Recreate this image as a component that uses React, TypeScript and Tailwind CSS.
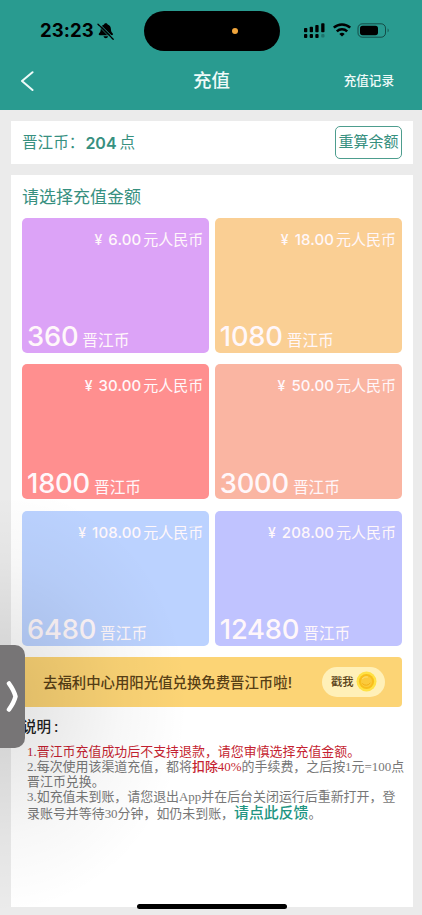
import React from "react";

const packs = [
  { price: "6.00", coins: "360", bg: "bg-[#dca3f7]" },
  { price: "18.00", coins: "1080", bg: "bg-[#facf94]" },
  { price: "30.00", coins: "1800", bg: "bg-[#ff8f8f]" },
  { price: "50.00", coins: "3000", bg: "bg-[#fab5a2]" },
  { price: "108.00", coins: "6480", bg: "bg-[#bbd2ff]" },
  { price: "208.00", coins: "12480", bg: "bg-[#c0c3ff]" },
];

function StatusBar() {
  return (
    <div className="relative h-[52px] text-black">
      <div className="flex h-[62px] items-center pl-[40px]">
        <span className="w-[54px] text-[18.5px] font-bold tracking-[0.1px]">23:23</span>
        <svg className="ml-[3px]" width="18" height="18" viewBox="0 0 18 18">
          <path d="M8.800 1.200C10 1.200 10.500 1.800 10.600 2.500c2.300.8 3.200 2.500 3.300 4.500.1 2.400.7 3.300 1.700 4.300.8.900.4 2-.7 2H2.800c-1.100 0-1.500-1.100-.7-2 1-1 1.600-1.900 1.700-4.300.1-2 1-3.700 3.300-4.500.1-.7.500-1.300 1.700-1.300zM6.500 14.300h4.600c-.3 1.300-1.200 2-2.300 2s-2-.7-2.300-2z" fill="currentColor" />
          <path d="M1.800 1.300 17 16.300" stroke="#299b90" strokeWidth="1" />
          <path d="M1 2.200 16.200 17.200" stroke="currentColor" strokeWidth="1.300" strokeLinecap="round" />
          <path d="M1.500 4 13.500 16" stroke="#299b90" strokeWidth=".7" />
        </svg>
      </div>
      <div className="absolute left-[144px] top-[11px] flex h-[40px] w-[136px] items-center rounded-full bg-black">
        <span className="ml-[88px] size-[6px] rounded-full bg-[#f0a53c]" />
      </div>
      <svg className="absolute left-[303px] top-[22px]" width="88" height="17" viewBox="0 0 88 17">
        <g fill="currentColor">
          <rect x="1" y="6" width="3.300" height="4.300" rx=".8" />
          <rect x="6.700" y="4.700" width="3.300" height="5.600" rx=".8" />
          <rect x="12.300" y="3" width="3.300" height="7.300" rx=".8" />
          <rect x="18.200" y="1.200" width="3.300" height="9.100" rx=".8" />
          <rect x="1" y="12" width="3.300" height="4" rx=".9" />
          <rect x="6.700" y="12" width="3.300" height="4" rx=".9" />
          <rect x="12.300" y="12" width="3.300" height="4" rx=".9" />
          <rect x="18.200" y="12" width="3.300" height="3.500" rx=".9" opacity=".25" />
          <path d="M39 14.600 36.300 11.900a4 4 0 0 1 5.400 0z" />
          <rect x="57" y="3.800" width="18" height="9.400" rx="2.600" />
          <path d="M84.700 6.500v3.800c1.200-.3 1.200-3.500 0-3.800z" opacity=".5" />
        </g>
        <g fill="none" stroke="currentColor" strokeWidth="2.500">
          <path d="M30.800 5.700a12 12 0 0 1 16.400 0" />
          <path d="M33.800 9.300a7.600 7.600 0 0 1 10.400 0" />
        </g>
        <rect x="55" y="1.800" width="27.500" height="13.400" rx="4.300" fill="none" stroke="currentColor" opacity=".5" />
      </svg>
    </div>
  );
}

function Header() {
  return (
    <header className="h-[110px] bg-[#299b90]">
      <StatusBar />
      <div className="grid h-[58px] grid-cols-[1fr_auto_1fr] items-center pl-[20px] pr-[28px] text-[#eefaf8]">
        <svg width="15" height="20" viewBox="0 0 15 20" fill="none" stroke="currentColor" strokeWidth="2" strokeLinecap="round" strokeLinejoin="round">
          <path d="M12.500 1.200 2 10l10.500 9" />
        </svg>
        <h1 className="pl-[9px] text-[18.500px] font-medium">充值</h1>
        <span className="justify-self-end text-[12.600px] font-medium">充值记录</span>
      </div>
    </header>
  );
}

function Pack({ price, coins, bg }: { price: string; coins: string; bg: string }) {
  return (
    <div className={`flex h-[135.300px] flex-col justify-between rounded-[5px] pl-[5px] pr-[6px] pt-[11px] text-[#fff7fa] ${bg}`}>
      <div className="flex items-center justify-end whitespace-nowrap text-[15px] leading-[22px]">
        <span className="mr-[6px] text-[14px] font-medium">¥</span>
        <span className="mr-[2px] text-[15px] font-medium tracking-[0.1px]">{price}</span>
        <span>元人民币</span>
      </div>
      <div className="flex h-[31.500px] items-baseline whitespace-nowrap leading-[32px]">
        <span className="text-[27.300px] font-medium tracking-[-0.2px]">{coins}</span>
        <span className="ml-[4px] text-[15.700px]">晋江币</span>
      </div>
    </div>
  );
}

function Banner() {
  return (
    <div className="mt-[11px] flex h-[50px] items-center justify-between rounded-[4px] bg-[#fcd475] pl-[21px] pr-[17px] text-[#584016]">
      <span className="whitespace-nowrap pt-[2px] text-[14.400px] font-medium">去福利中心用阳光值兑换免费晋江币啦!</span>
      <span className="flex h-[30px] w-[63px] items-center justify-between rounded-full bg-[#fff0b8] pl-[9px] pr-[8px]">
        <span className="whitespace-nowrap text-[11.300px] font-medium">戳我</span>
        <svg width="21" height="21" viewBox="0 0 21 21">
          <circle cx="10.500" cy="10.500" r="10" fill="#ffe144" />
          <circle cx="10.500" cy="10.500" r="7.600" fill="#f8be1c" />
          <circle cx="10.500" cy="10.500" r="5.500" fill="#fbca3c" />
          <path d="M6.500 12.700a4.600 4.600 0 0 0 7.600-.6" fill="none" stroke="#f3b016" strokeWidth="1" strokeLinecap="round" />
          <path d="M6.500 7.500a5 5 0 0 1 5-1.600" fill="none" stroke="#fde27a" strokeWidth="1" strokeLinecap="round" />
        </svg>
      </span>
    </div>
  );
}

function Notes() {
  return (
    <section className="mt-[9px]">
      <h2 className="text-[14.500px] font-medium leading-[22px] text-[#222]">说明<span className="ml-[3px]">:</span></h2>
      <div className="ml-[5px] mt-[6.500px] whitespace-nowrap font-['Liberation_Serif','Noto_Sans_CJK_SC',serif] text-[12.950px] leading-[15px] text-[#777]">
        <p className="text-[#c51f31]">1.晋江币充值成功后不支持退款，请您审慎选择充值金额。</p>
        <p>2.每次使用该渠道充值，都将<span className="font-medium text-[#c51f31]">扣除40%</span>的手续费，之后按1元=100点</p>
        <p>晋江币兑换。</p>
        <p>3.如充值未到账，请您退出App并在后台关闭运行后重新打开，登</p>
        <p className="leading-[19px]">录账号并等待30分钟，如仍未到账，<a className="text-[14.900px] font-medium text-[#229582]">请点此反馈</a>。</p>
      </div>
    </section>
  );
}

export default function App() {
  return (
    <div className="relative h-[915px] w-[422px] overflow-hidden bg-[#ebebeb] font-['Inter','Noto_Sans_CJK_SC',sans-serif]">
      <Header />
      <main className="pl-[11px] pr-[9px] pt-[11px]">
        <section className="flex h-[43px] items-center justify-between bg-white px-[11px] text-[#37907f]">
          <span className="flex items-center text-[15.600px]">
            <span>晋江币：</span>
            <span className="ml-px mr-[3px] text-[16px] font-semibold">204</span>
            <span>点</span>
          </span>
          <button className="h-[33px] w-[67px] whitespace-nowrap rounded-[5px] border border-[#4d9d8e] text-[15px]">重算余额</button>
        </section>
        <section className="mt-[11px] h-[732px] bg-white px-[11px] pt-[9px]">
          <h2 className="h-[33.500px] text-[17px] leading-[26px] text-[#37907f]">请选择充值金额</h2>
          <div className="grid grid-cols-2 gap-x-[5.500px] gap-y-[11.300px]">
            {packs.map((p) => <Pack key={p.coins} {...p} />)}
          </div>
          <Banner />
          <Notes />
        </section>
      </main>
      <div className="pointer-events-none absolute left-0 top-[500px] h-[415px] w-[190px] bg-[radial-gradient(ellipse_at_0%_48%,rgba(0,0,0,0.12),rgba(0,0,0,0.03)_45%,transparent_70%)]" />
      <div className="absolute left-0 top-[645px] flex h-[103px] w-[25px] items-center rounded-r-[10px] bg-[#777576]">
        <svg className="ml-[6px]" width="13" height="31" viewBox="0 0 13 31" fill="none" stroke="white" strokeWidth="4.500" strokeLinecap="round" strokeLinejoin="round">
          <path d="M3 2.500 Q8 9.500 9.500 15.500 Q8 21.500 3 28.500" />
        </svg>
      </div>
      <div className="absolute left-[137px] top-[904px] h-[5px] w-[150px] rounded-full bg-black" />
    </div>
  );
}
